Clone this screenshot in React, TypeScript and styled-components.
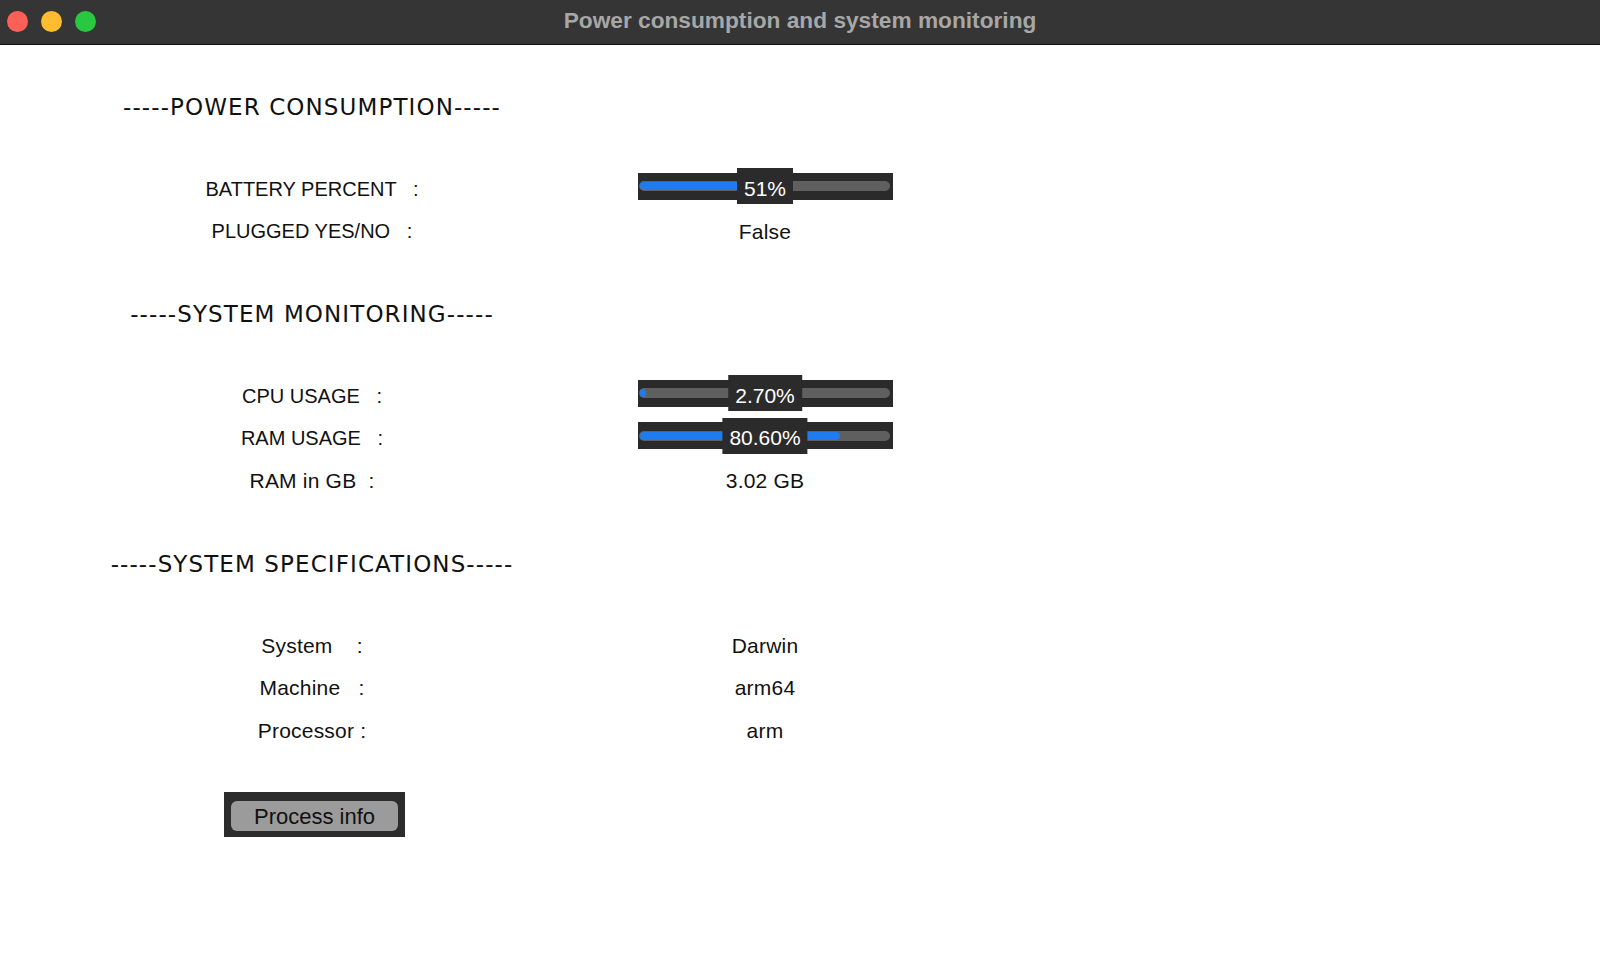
import React from "react";
import styled, { createGlobalStyle } from "styled-components";

const Global = createGlobalStyle`
  html, body { margin: 0; padding: 0; background: #ffffff; }
  body { font-family: "Liberation Sans", Arial, sans-serif; }
`;

const Window = styled.div`
  width: 1600px;
  height: 965px;
  display: flex;
  flex-direction: column;
  background: #ffffff;
  overflow: hidden;
`;

const TitleBar = styled.header`
  height: 44px;
  flex: none;
  background: #353535;
  border-bottom: 1px solid #0e0e0e;
  display: grid;
  grid-template-columns: 1fr auto 1fr;
  align-items: center;
`;

const Lights = styled.div`
  display: flex;
  gap: 13px;
  padding-left: 6.5px;
  margin-bottom: 2px;
`;

const Light = styled.span<{ $c: string }>`
  width: 21px;
  height: 21px;
  border-radius: 50%;
  background: ${(p) => p.$c};
`;

const Title = styled.h1`
  margin: 0 0 4px 0;
  font-family: "Liberation Sans", Arial, sans-serif;
  font-weight: bold;
  font-size: 22.7px;
  color: #a7a7a7;
  white-space: nowrap;
`;

const Content = styled.main`
  display: flex;
  flex-direction: column;
  padding-top: 1px;
`;

const SectionHeading = styled.h2`
  width: 624px;
  height: 42px;
  padding: 40px 0;
  margin: 0;
  display: flex;
  align-items: center;
  justify-content: center;
  font-family: "DejaVu Sans", Verdana, sans-serif;
  font-weight: normal;
  font-size: 23px;
  letter-spacing: 1.1px;
  color: #111;
  white-space: pre;
`;

const Row = styled.div`
  display: grid;
  grid-template-columns: 624px 282px;
  height: 42.5px;
  align-items: center;
  justify-items: center;
`;

const Label = styled.span<{ $mixed?: boolean }>`
  font-size: ${(p) => (p.$mixed ? "21px" : "20px")};
  letter-spacing: ${(p) => (p.$mixed ? "0.2px" : "0")};
  color: #111;
  white-space: pre;
`;

const Value = styled.span`
  font-size: 21px;
  letter-spacing: 0.2px;
  color: #111;
  white-space: pre;
`;

const Meter = styled.div`
  position: relative;
  width: 255px;
  height: 27px;
  margin-bottom: 6px;
  background: #2a2a2a;
  display: flex;
  align-items: center;
  padding: 0 3px 0 1px;
  box-sizing: border-box;
`;

const Track = styled.div`
  flex: 1;
  height: 10px;
  border-radius: 5px;
  background: #5f5f5f;
  padding: 1px;
  box-sizing: border-box;
  display: flex;
`;

const Fill = styled.div`
  height: 8px;
  border-radius: 4px;
  background: #1f7bf0;
`;

const Badge = styled.div`
  position: absolute;
  left: 50%;
  top: 50%;
  transform: translate(-50%, -50%);
  height: 36px;
  box-sizing: border-box;
  padding: 5px 7px 0 7px;
  background: #2b2b2b;
  color: #ffffff;
  font-size: 21px;
  display: flex;
  align-items: center;
  white-space: nowrap;
`;

const ButtonRow = styled.div`
  width: 624px;
  padding: 40px 0 40px 5px;
  box-sizing: border-box;
  display: flex;
  justify-content: center;
`;

const ButtonFrame = styled.div`
  background: #2c2c2c;
  padding: 9px 7px 6px 7px;
  display: flex;
`;

const Button = styled.button`
  width: 167px;
  height: 30px;
  border: none;
  border-radius: 6px;
  background: #9b9b9b;
  color: #111;
  font-family: "Liberation Sans", Arial, sans-serif;
  font-size: 22px;
  padding: 2px 0 0 0;
  cursor: pointer;
`;

const ProgressMeter: React.FC<{ pct: number; text: string }> = ({ pct, text }) => (
  <Meter>
    <Track>
      <Fill style={{ width: `${pct}%` }} />
    </Track>
    <Badge>{text}</Badge>
  </Meter>
);

export default function App() {
  return (
    <>
      <Global />
      <Window>
        <TitleBar>
          <Lights>
            <Light $c="#fe5f57" />
            <Light $c="#febc2e" />
            <Light $c="#28c840" />
          </Lights>
          <Title>Power consumption and system monitoring</Title>
          <div />
        </TitleBar>
        <Content>
          <SectionHeading>-----POWER CONSUMPTION-----</SectionHeading>
          <Row>
            <Label>{"BATTERY PERCENT   :"}</Label>
            <ProgressMeter pct={51} text="51%" />
          </Row>
          <Row>
            <Label>{"PLUGGED YES/NO   :"}</Label>
            <Value>False</Value>
          </Row>

          <SectionHeading>-----SYSTEM MONITORING-----</SectionHeading>
          <Row>
            <Label>{"CPU USAGE   :"}</Label>
            <ProgressMeter pct={2.7} text="2.70%" />
          </Row>
          <Row>
            <Label>{"RAM USAGE   :"}</Label>
            <ProgressMeter pct={80.6} text="80.60%" />
          </Row>
          <Row>
            <Label $mixed>{"RAM in GB  :"}</Label>
            <Value>3.02 GB</Value>
          </Row>

          <SectionHeading>-----SYSTEM SPECIFICATIONS-----</SectionHeading>
          <Row>
            <Label $mixed>{"System    :"}</Label>
            <Value>Darwin</Value>
          </Row>
          <Row>
            <Label $mixed>{"Machine   :"}</Label>
            <Value>arm64</Value>
          </Row>
          <Row>
            <Label $mixed>{"Processor :"}</Label>
            <Value>arm</Value>
          </Row>

          <ButtonRow>
            <ButtonFrame>
              <Button>Process info</Button>
            </ButtonFrame>
          </ButtonRow>
        </Content>
      </Window>
    </>
  );
}
